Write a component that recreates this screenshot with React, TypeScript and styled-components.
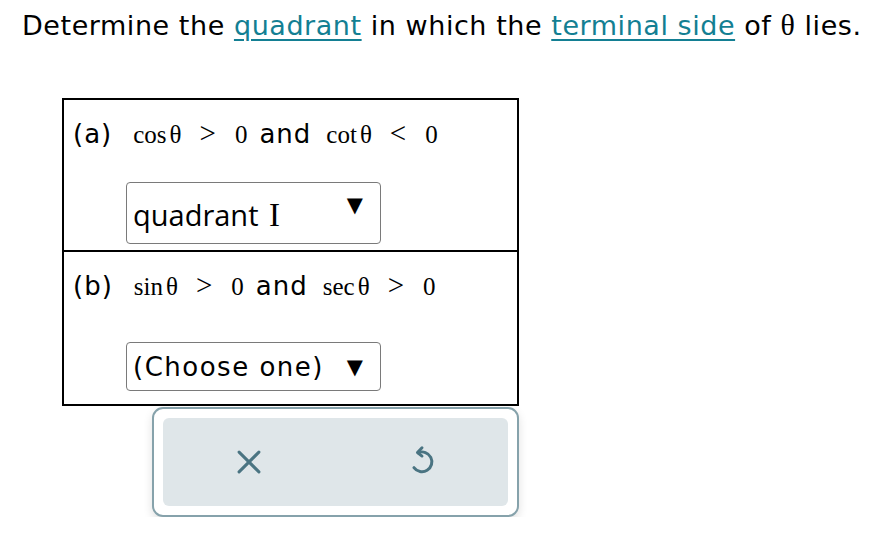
import React from "react";
import styled, { createGlobalStyle } from "styled-components";

const Global = createGlobalStyle`
  html, body { margin: 0; padding: 0; background: #fff; }
  body { font-family: "DejaVu Sans", Verdana, sans-serif; color: #000; }
`;

const Page = styled.div`
  padding: 9px 0 0 22px;
  display: flex;
  flex-direction: column;
`;

const Title = styled.div`
  font-size: 27px;
  letter-spacing: 0.55px;
  line-height: 32px;
  white-space: nowrap;
`;

const Link = styled.span`
  color: #137f93;
  text-decoration: underline;
  text-underline-offset: 4px;
  text-decoration-thickness: 2px;
`;

const Theta = styled.span`
  font-family: "Liberation Serif", "Times New Roman", serif;
  font-size: 30px;
`;

const Table = styled.div`
  margin: 56px 0 0 40px;
  width: 457px;
  border: 2px solid #000;
  box-sizing: border-box;
  display: flex;
  flex-direction: column;
`;

const Row = styled.div<{ $h: number; $divider?: boolean }>`
  height: ${(p) => p.$h}px;
  box-sizing: border-box;
  border-top: ${(p) => (p.$divider ? "2px solid #000" : "none")};
  padding: 15px 0 0 9px;
  display: flex;
  flex-direction: column;
`;

const Prompt = styled.div`
  font-size: 26px;
  letter-spacing: 1px;
  line-height: 36px;
  white-space: nowrap;
  display: flex;
  align-items: baseline;
`;

const Label = styled.span`
  margin-right: 18px;
`;

const Math = styled.span`
  font-family: "Liberation Serif", "Times New Roman", serif;
  font-size: 25px;
  letter-spacing: 0;
  margin: 0 12px 0 3px;
  & + & {
    margin-left: 15px;
  }
`;

const Fn = styled.span`
  margin-right: 3px;
`;

const Op = styled.span`
  font-size: 29px;
  margin: 0 19px 0 18px;
`;

const Select = styled.div<{ $h: number; $top: number }>`
  margin: ${(p) => p.$top}px 0 0 53px;
  width: 255px;
  height: ${(p) => p.$h}px;
  box-sizing: border-box;
  border: 1.5px solid #7a7a7a;
  border-radius: 4px;
  display: flex;
  align-items: center;
  justify-content: space-between;
  padding: 0 17px 0 6px;
  white-space: nowrap;
`;

const SelectText = styled.span<{ $shift: number; $alt?: boolean }>`
  position: relative;
  top: ${(p) => p.$shift}px;
  font-family: ${(p) => (p.$alt ? '"Open Sans", sans-serif' : '"DejaVu Sans", Verdana, sans-serif')};
  font-size: ${(p) => (p.$alt ? 29 : 26)}px;
  letter-spacing: ${(p) => (p.$alt ? 0 : 1.5)}px;
`;

const Roman = styled.span`
  font-family: "Liberation Serif", "Times New Roman", serif;
  font-size: 33px;
  margin-left: 3px;
`;

const Arrow = styled.span<{ $shift: number }>`
  font-family: "DejaVu Sans", sans-serif;
  font-size: 21px;
  position: relative;
  top: ${(p) => p.$shift}px;
`;

const Panel = styled.div`
  margin: 1px 0 0 130px;
  width: 367px;
  height: 110px;
  box-sizing: border-box;
  border: 2px solid #86a2ab;
  border-radius: 11px;
  background: #fff;
  box-shadow: 0 4px 10px rgba(0, 0, 0, 0.12);
  padding: 9px;
  display: flex;
`;

const Buttons = styled.div`
  flex: 1;
  background: #dfe6e9;
  border-radius: 6px;
  display: grid;
  grid-template-columns: 1fr 1fr;
  align-items: center;
  justify-items: center;
`;

const IconButton = styled.div`
  display: flex;
  align-items: center;
  justify-content: center;
  color: #4a7482;
`;

export default function App() {
  return (
    <>
      <Global />
      <Page>
        <Title>
          Determine the <Link>quadrant</Link> in which the{" "}
          <Link>terminal side</Link> of <Theta>θ</Theta> lies.
        </Title>
        <Table>
          <Row $h={150}>
            <Prompt>
              <Label>(a)</Label>
              <Math>
                <Fn>cos</Fn>θ<Op>&gt;</Op>0
              </Math>
              and
              <Math>
                <Fn>cot</Fn>θ<Op>&lt;</Op>0
              </Math>
            </Prompt>
            <Select $h={62} $top={29}>
              <SelectText $shift={1} $alt>
                quadrant <Roman>I</Roman>
              </SelectText>
              <Arrow $shift={-8}>▼</Arrow>
            </Select>
          </Row>
          <Row $h={154} $divider>
            <Prompt>
              <Label>(b)</Label>
              <Math>
                <Fn>sin</Fn>θ<Op>&gt;</Op>0
              </Math>
              and
              <Math>
                <Fn>sec</Fn>θ<Op>&gt;</Op>0
              </Math>
            </Prompt>
            <Select $h={49} $top={37}>
              <SelectText $shift={0}>(Choose one)</SelectText>
              <Arrow $shift={0}>▼</Arrow>
            </Select>
          </Row>
        </Table>
        <Panel>
          <Buttons>
            <IconButton>
              <svg width="28" height="28" viewBox="0 0 24 24" fill="none" stroke="currentColor" strokeWidth="2.6" strokeLinecap="round">
                <path d="M3.5 3.5 L20.5 20.5 M20.5 3.5 L3.5 20.5" />
              </svg>
            </IconButton>
            <IconButton>
              <svg width="34" height="34" viewBox="0 0 24 24" fill="none" stroke="currentColor" strokeWidth="2.1" strokeLinecap="round" strokeLinejoin="round">
                <path d="M12 2 L8.8 5.3 L12 7.8" />
                <path d="M9.3 5.4 A7 7 0 1 1 6.3 16" />
              </svg>
            </IconButton>
          </Buttons>
        </Panel>
      </Page>
    </>
  );
}
